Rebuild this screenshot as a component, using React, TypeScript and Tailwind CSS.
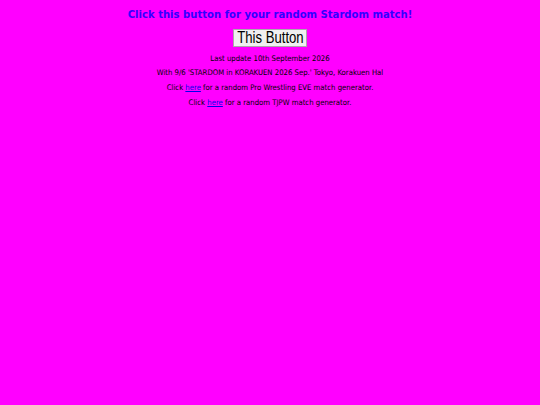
export default function App() {
  return (
    <div className="min-h-[405px] w-full bg-[#ff00ff] text-center font-['DejaVu_Sans_Condensed','DejaVu_Sans',Verdana,sans-serif] text-black">
      <h1 className="pt-[6px] text-[11.2px] leading-[17px] font-bold text-[#3300ff]">
        Click this button for your random Stardom match!
      </h1>
      <div className="mt-[6px] flex justify-center">
        <button className="flex h-[18px] w-[74px] items-center justify-center border border-[#aaaaaa] bg-[#f0f0f0] font-['Liberation_Sans',Arial,sans-serif] text-[16px] leading-none">
          <span className="inline-block scale-x-[0.82] whitespace-nowrap">This Button</span>
        </button>
      </div>
      <div className="mt-[4.5px] flex flex-col text-[7.7px] leading-[14.8px]">
        <p>Last update 10th September 2026</p>
        <p>With 9/6 'STARDOM in KORAKUEN 2026 Sep.' Tokyo, Korakuen Hal</p>
        <p>
          Click <a href="#" className="text-[#0000ee] underline">here</a> for a random Pro Wrestling EVE match generator.
        </p>
        <p>
          Click <a href="#" className="text-[#0000ee] underline">here</a> for a random TJPW match generator.
        </p>
      </div>
    </div>
  );
}
